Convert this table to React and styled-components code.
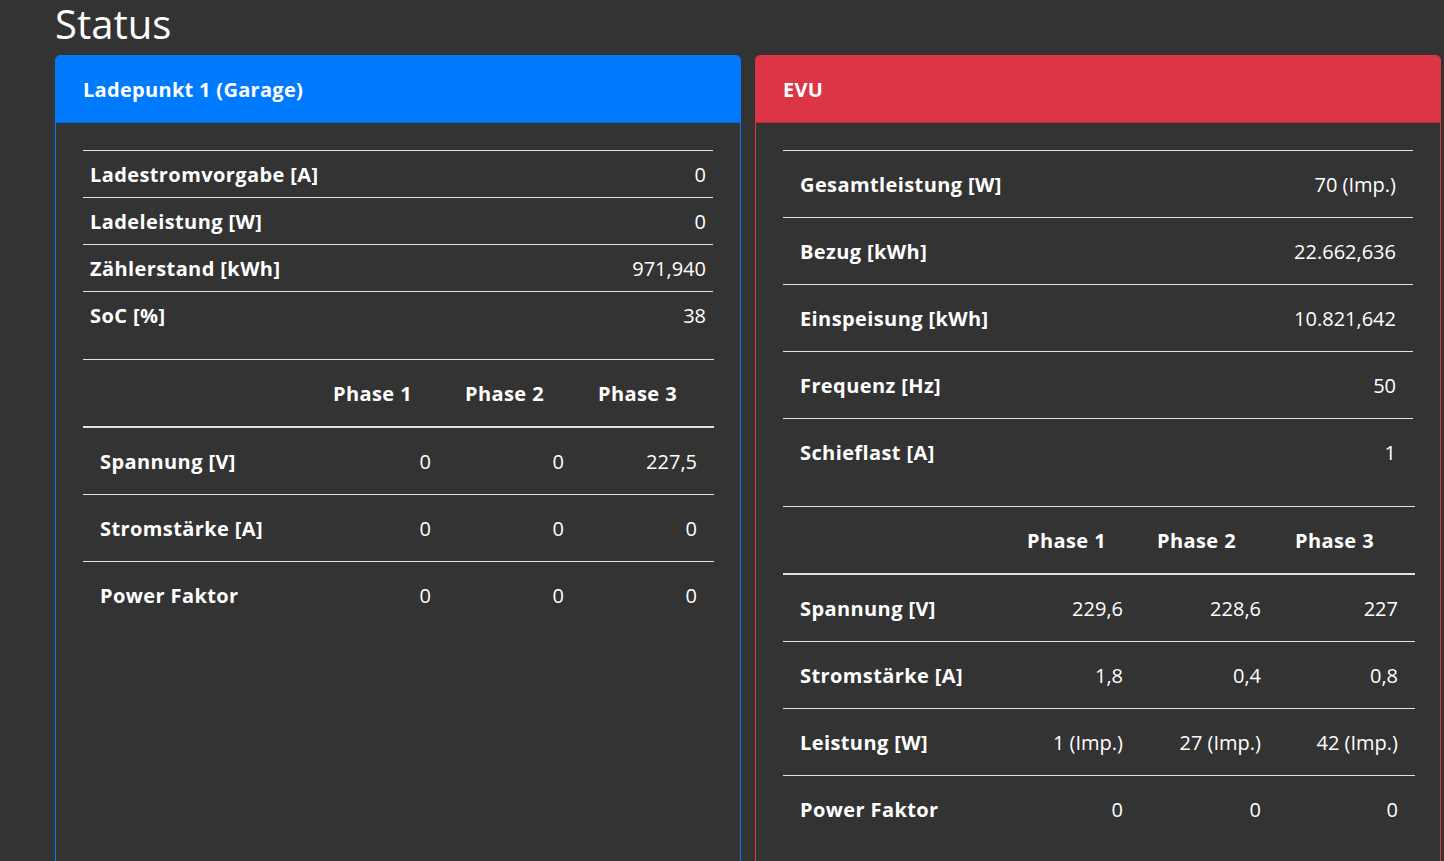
import React from "react";
import styled, { createGlobalStyle } from "styled-components";

const GlobalStyle = createGlobalStyle`
  html, body {
    margin: 0;
    background: #333333;
    color: #ffffff;
    font-family: "Open Sans", "Noto Sans", sans-serif;
  }
`;

const Page = styled.div`
  padding: 0 3px 0 55px;
`;

const Title = styled.h1`
  margin: 0 0 9px;
  padding-top: 2px;
  font-size: 40px;
  line-height: 44px;
  font-weight: 400;
`;

const CardRow = styled.div`
  display: flex;
  gap: 14px;
  align-items: stretch;
`;

const Card = styled.div`
  flex: 1;
  border: 1px solid ${(p) => p.$color};
  border-radius: 5px 5px 0 0;
  overflow: hidden;
`;

const CardHeader = styled.div`
  background: ${(p) => p.$color};
  border-bottom: 1px solid ${(p) => p.$edge};
  padding: 19px 27px 17px;
  font-size: 20px;
  line-height: 30px;
  font-weight: 700;
  letter-spacing: 0.3px;
`;

const CardBody = styled.div`
  padding: 27px;
`;

const Table = styled.table`
  width: 100%;
  border-collapse: collapse;
  margin-bottom: 21px;
  font-size: 20px;
  line-height: 30px;
  table-layout: fixed;
`;

const Col = styled.col`
  width: ${(p) => p.$w}px;
`;

const Label = styled.td`
  border-top: 1px solid #dee2e6;
  padding: ${(p) => (p.$small ? "9px 7px 7px" : "19px 17px 17px")};
  font-weight: 700;
  letter-spacing: 0.4px;
  text-align: left;
`;

const Value = styled.td`
  border-top: 1px solid #dee2e6;
  padding: ${(p) => (p.$small ? "9px 7px 7px" : "19px 17px 17px")};
  text-align: right;
`;

const HeadCell = styled.th`
  border-top: 1px solid #dee2e6;
  border-bottom: 2px solid #dee2e6;
  padding: 19px 17px 17px;
  font-weight: 700;
  letter-spacing: 0.4px;
  text-align: left;
`;

const InfoTable = ({ rows, small }) => (
  <Table>
    <tbody>
      {rows.map(([label, value]) => (
        <tr key={label}>
          <Label $small={small}>{label}</Label>
          <Value $small={small}>{value}</Value>
        </tr>
      ))}
    </tbody>
  </Table>
);

const PhaseTable = ({ widths, rows }) => (
  <Table>
    <colgroup>
      {widths.map((w, i) => (
        <Col key={i} $w={w} />
      ))}
    </colgroup>
    <thead>
      <tr>
        <HeadCell />
        <HeadCell>Phase 1</HeadCell>
        <HeadCell>Phase 2</HeadCell>
        <HeadCell>Phase 3</HeadCell>
      </tr>
    </thead>
    <tbody>
      {rows.map(([label, ...vals]) => (
        <tr key={label}>
          <Label>{label}</Label>
          {vals.map((v, i) => (
            <Value key={i}>{v}</Value>
          ))}
        </tr>
      ))}
    </tbody>
  </Table>
);

const App = () => {
  return (
    <Page>
      <GlobalStyle />
      <Title>Status</Title>
      <CardRow>
        <Card $color="#007bff">
          <CardHeader $color="#007bff" $edge="#0069d9">
            Ladepunkt 1 (Garage)
          </CardHeader>
          <CardBody>
            <InfoTable
              small
              rows={[
                ["Ladestromvorgabe [A]", "0"],
                ["Ladeleistung [W]", "0"],
                ["Zählerstand [kWh]", "971,940"],
                ["SoC [%]", "38"],
              ]}
            />
            <PhaseTable
              widths={[233, 132, 133, 133]}
              rows={[
                ["Spannung [V]", "0", "0", "227,5"],
                ["Stromstärke [A]", "0", "0", "0"],
                ["Power Faktor", "0", "0", "0"],
              ]}
            />
          </CardBody>
        </Card>
        <Card $color="#dc3545">
          <CardHeader $color="#dc3545" $edge="#c82333">
            EVU
          </CardHeader>
          <CardBody>
            <InfoTable
              rows={[
                ["Gesamtleistung [W]", "70 (Imp.)"],
                ["Bezug [kWh]", "22.662,636"],
                ["Einspeisung [kWh]", "10.821,642"],
                ["Frequenz [Hz]", "50"],
                ["Schieflast [A]", "1"],
              ]}
            />
            <PhaseTable
              widths={[227, 130, 138, 137]}
              rows={[
                ["Spannung [V]", "229,6", "228,6", "227"],
                ["Stromstärke [A]", "1,8", "0,4", "0,8"],
                ["Leistung [W]", "1 (Imp.)", "27 (Imp.)", "42 (Imp.)"],
                ["Power Faktor", "0", "0", "0"],
              ]}
            />
          </CardBody>
        </Card>
      </CardRow>
    </Page>
  );
};

export default App;
